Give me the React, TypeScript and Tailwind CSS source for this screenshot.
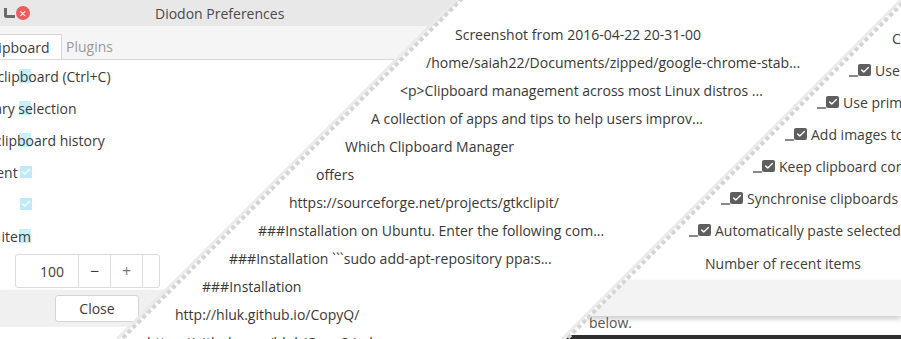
import { Check } from "lucide-react";

const font = "font-['Open_Sans','Noto_Sans',sans-serif]";

const leftRows = [
  { text: "Use clipboard (Ctrl+C)", ml: "-ml-[31px]", box: false },
  { text: "Use primary selection", ml: "-ml-[65px]", box: false },
  { text: "Add images to clipboard history", ml: "-ml-[102px]", box: false },
  { text: "Keep clipboard content", ml: "-ml-[134px]", box: true },
  { text: "Synchronise clipboards", ml: "-ml-[170px]", box: true },
  { text: "Automatically paste selected item", ml: "-ml-[188px]", box: false },
];

const menuRows = [
  { text: "Screenshot from 2016-04-22 20-31-00", ml: "ml-[455px]" },
  { text: "/home/saiah22/Documents/zipped/google-chrome-stab...", ml: "ml-[426px]" },
  { text: "<p>Clipboard management across most Linux distros ...", ml: "ml-[400px]" },
  { text: "A collection of apps and tips to help users improv...", ml: "ml-[371px]" },
  { text: "Which Clipboard Manager", ml: "ml-[345px]" },
  { text: "offers", ml: "ml-[316px]" },
  { text: "https://sourceforge.net/projects/gtkclipit/", ml: "ml-[289px]" },
  { text: "###Installation on Ubuntu. Enter the following com...", ml: "ml-[258px]" },
  { text: "###Installation ```sudo add-apt-repository ppa:s...", ml: "ml-[229px]" },
  { text: "###Installation", ml: "ml-[202px]" },
  { text: "http://hluk.github.io/CopyQ/", ml: "ml-[175px]" },
  { text: "https://github.com/hluk/CopyQ/releases", ml: "ml-[147px]" },
];

const rightRows = [
  { text: "Use clipboard (Ctrl+C)", ml: "ml-[849px]" },
  { text: "Use primary selection", ml: "ml-[817px]" },
  { text: "Add images to clipboard history", ml: "ml-[785px]" },
  { text: "Keep clipboard content", ml: "ml-[753px]" },
  { text: "Synchronise clipboards", ml: "ml-[721px]" },
  { text: "Automatically paste selected item", ml: "ml-[689px]" },
];

function LeftWindow() {
  return (
    <div className="col-start-1 row-start-1 flex flex-col h-[339px] overflow-hidden bg-white text-[14px] text-[#3c3c3c]">
      <div className="h-[26px] bg-[#e8e8e8] flex items-center shrink-0">
        <div className="w-[155px] flex items-center pl-[4px] gap-[1px]">
          <span className="w-[11px] h-[10px] border-l-[3px] border-b-[3px] border-[#6b6b6b] rounded-bl-[3px]" />
          <span className="w-[14px] h-[14px] rounded-full bg-[#ef5a5a] flex items-center justify-center text-white text-[9px] leading-none">
            ✕
          </span>
        </div>
        <span className="text-[#4a4a4a]">Diodon Preferences</span>
      </div>
      <div className="h-[34px] bg-[#f5f5f5] border-b border-[#dadada] flex items-end shrink-0">
        <div className="h-[25px] w-[62px] bg-white border-t border-r border-[#d6d6d6] flex items-center overflow-hidden">
          <span className="-ml-[14px] whitespace-nowrap">Clipboard</span>
        </div>
        <div className="h-[25px] flex items-center pl-[4px] text-[#9a9a9a]">Plugins</div>
      </div>
      <div className="flex flex-col">
        {leftRows.map((r) => (
          <div key={r.text} className="h-[32px] flex items-center relative">
            {r.box && (
              <span className="absolute left-[20px] top-[10px] w-[12px] h-[12px] bg-[#bfeafc] flex items-center justify-center">
                <Check className="w-[10px] h-[10px] text-white" strokeWidth={3} />
              </span>
            )}
            {!r.box && <span className="absolute left-[19px] top-[9px] w-[12px] h-[14px] bg-[#c8effd]" />}
            <span className={`${r.ml} whitespace-nowrap relative`}>{r.text}</span>
          </div>
        ))}
      </div>
      <div className="h-[34px] mt-[2px] ml-[15px] w-[145px] flex border border-[#dcdcdc] rounded-[3px] bg-white shrink-0">
        <div className="w-[63px] border-r border-[#dcdcdc] flex items-center justify-end pr-[14px]">100</div>
        <div className="w-[32px] border-r border-[#dcdcdc] flex items-center justify-center text-[16px]">−</div>
        <div className="w-[32px] border-r border-[#dcdcdc] flex items-center justify-center text-[16px] text-[#777]">+</div>
      </div>
      <div className="h-[37px] mt-[2px] bg-[#f0f0f0] flex items-center shrink-0 shadow-[0_3px_5px_rgba(0,0,0,0.18)]">
        <div className="ml-[55px] w-[84px] h-[27px] bg-white border border-[#d4d4d4] rounded-[3px] flex items-center justify-center">
          Close
        </div>
      </div>
      <div className="flex-1 bg-white" />
    </div>
  );
}

function MenuPanel() {
  return (
    <div className="col-start-1 row-start-1 h-[339px] overflow-hidden bg-white pt-[21px] text-[14px] text-[#383838] [clip-path:polygon(460px_0,905px_0,566px_339px,121px_339px)]">
      {menuRows.map((r) => (
        <div key={r.text} className={`${r.ml} h-[28px] leading-[28px] whitespace-nowrap`}>
          {r.text}
        </div>
      ))}
    </div>
  );
}

function RightPanel() {
  return (
    <div className="col-start-1 row-start-1 h-[339px] overflow-hidden bg-white flex flex-col text-[14px] text-[#404040] [clip-path:polygon(905px_0,1000px_0,1000px_339px,566px_339px)]">
      <div className="h-[32px] mt-[22px] flex items-center shrink-0">
        <span className="ml-[892px] whitespace-nowrap">Clipboard</span>
      </div>
      {rightRows.map((r) => (
        <div key={r.text} className={`${r.ml} h-[32px] flex items-center whitespace-nowrap shrink-0`}>
          <span className="w-[9px] h-[2px] bg-[#8a8a8a] self-end mb-[9px] shrink-0" />
          <span className="w-[13px] h-[12px] bg-[#5e5e5e] rounded-[2px] flex items-center justify-center mr-[4px] shrink-0">
            <Check className="w-[10px] h-[10px] text-white" strokeWidth={3.5} />
          </span>
          <span className="shrink-0">{r.text}</span>
        </div>
      ))}
      <div className="h-[34px] flex items-center shrink-0">
        <span className="ml-[705px] whitespace-nowrap">Number of recent items</span>
      </div>
      <div className="h-[36px] bg-[#f3f3f3] shrink-0 shadow-[0_3px_5px_rgba(0,0,0,0.2)]" />
      <div className="h-[14px] leading-[14px] shrink-0">
        <span className="ml-[589px] whitespace-nowrap text-[#555]">below.</span>
      </div>
      <div className="flex-1" />
      <div className="h-[4px] bg-[#2e2e2e] shrink-0" />
    </div>
  );
}

export default function App() {
  return (
    <div className={`w-[901px] h-[339px] overflow-hidden grid grid-rows-[339px] relative bg-white ${font}`}>
      <LeftWindow />
      <MenuPanel />
      <RightPanel />
      <svg className="absolute inset-0 pointer-events-none" width="901" height="339" viewBox="0 0 901 339">
        <line x1="462" y1="-2" x2="121" y2="339" stroke="#d4d4d4" strokeWidth="5" strokeDasharray="4 3" />
        <line x1="458" y1="-2" x2="117" y2="339" stroke="#ebebeb" strokeWidth="3" />
        <line x1="907" y1="-2" x2="566" y2="339" stroke="#d4d4d4" strokeWidth="5" strokeDasharray="4 3" />
        <line x1="903" y1="-2" x2="562" y2="339" stroke="#ebebeb" strokeWidth="3" />
      </svg>
    </div>
  );
}
